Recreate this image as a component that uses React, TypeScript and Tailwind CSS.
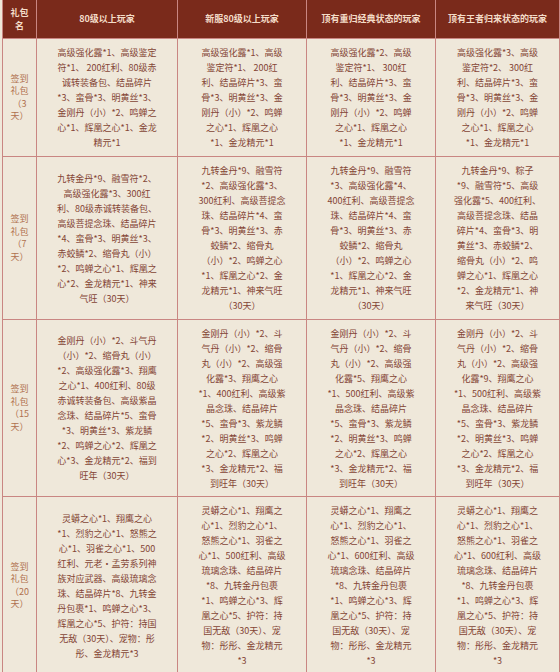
import React from "react";

const headers = ["80级以上玩家", "新服80级以上玩家", "顶有重归经典状态的玩家", "顶有王者归来状态的玩家"];

const rows: { label: string[]; cells: string[][] }[] = [
  {
    label: ["签到", "礼包", "（3", "天）"],
    cells: [
      ["高级强化露*1、高级鉴定", "符*1、 200红利、80级赤", "诚转装备包、结晶碎片", "*3、蛮骨*3、明黄丝*3、", "金刚丹（小）*2、鸣蝉之", "心*1、辉凰之心*1、金龙", "精元*1"],
      ["高级强化露*1、高级", "鉴定符*1、 200红", "利、结晶碎片*3、蛮", "骨*3、明黄丝*3、金", "刚丹（小）*2、鸣蝉", "之心*1、辉凰之心", "*1、金龙精元*1"],
      ["高级强化露*2、高级", "鉴定符*1、 300红", "利、结晶碎片*3、蛮", "骨*3、明黄丝*3、金", "刚丹（小）*2、鸣蝉", "之心*1、辉凰之心", "*1、金龙精元*1"],
      ["高级强化露*3、高级", "鉴定符*2、 300红", "利、结晶碎片*3、蛮", "骨*3、明黄丝*3、金", "刚丹（小）*2、鸣蝉", "之心*1、辉凰之心", "*1、金龙精元*1"],
    ],
  },
  {
    label: ["签到", "礼包", "（7", "天）"],
    cells: [
      ["九转金丹*9、融雪符*2、", "高级强化露*3、300红", "利、80级赤诚转装备包、", "高级菩提念珠、结晶碎片", "*4、蛮骨*3、明黄丝*3、", "赤蛟鳞*2、缩骨丸（小）", "*2、鸣蝉之心*1、辉凰之", "心*2、金龙精元*1、神来", "气旺（30天）"],
      ["九转金丹*9、融雪符", "*2、高级强化露*3、", "300红利、高级菩提念", "珠、结晶碎片*4、蛮", "骨*3、明黄丝*3、赤", "蛟鳞*2、缩骨丸", "（小）*2、鸣蝉之心", "*1、辉凰之心*2、金", "龙精元*1、神来气旺", "（30天）"],
      ["九转金丹*9、融雪符", "*3、高级强化露*4、", "400红利、高级菩提念", "珠、结晶碎片*4、蛮", "骨*3、明黄丝*3、赤", "蛟鳞*2、缩骨丸", "（小）*2、鸣蝉之心", "*1、辉凰之心*2、金", "龙精元*1、神来气旺", "（30天）"],
      ["九转金丹*9、粽子", "*9、融雪符*5、高级", "强化露*5、400红利、", "高级菩提念珠、结晶", "碎片*4、蛮骨*3、明", "黄丝*3、赤蛟鳞*2、", "缩骨丸（小）*2、鸣", "蝉之心*1、辉凰之心", "*2、金龙精元*1、神", "来气旺（30天）"],
    ],
  },
  {
    label: ["签到", "礼包", "（15", "天）"],
    cells: [
      ["金刚丹（小）*2、斗气丹", "（小）*2、缩骨丸（小）", "*2、高级强化露*3、翔鹰", "之心*1、400红利、80级", "赤诚转装备包、高级紫晶", "念珠、结晶碎片*5、蛮骨", "*3、明黄丝*3、紫龙鳞", "*2、鸣蝉之心*2、辉凰之", "心*3、金龙精元*2、福到", "旺年（30天）"],
      ["金刚丹（小）*2、斗", "气丹（小）*2、缩骨", "丸（小）*2、高级强", "化露*3、翔鹰之心", "*1、400红利、高级紫", "晶念珠、结晶碎片", "*5、蛮骨*3、紫龙鳞", "*2、明黄丝*3、鸣蝉", "之心*2、辉凰之心", "*3、金龙精元*2、福", "到旺年（30天）"],
      ["金刚丹（小）*2、斗", "气丹（小）*2、缩骨", "丸（小）*2、高级强", "化露*5、翔鹰之心", "*1、500红利、高级紫", "晶念珠、结晶碎片", "*5、蛮骨*3、紫龙鳞", "*2、明黄丝*3、鸣蝉", "之心*2、辉凰之心", "*3、金龙精元*2、福", "到旺年（30天）"],
      ["金刚丹（小）*2、斗", "气丹（小）*2、缩骨", "丸（小）*2、高级强", "化露*9、翔鹰之心", "*1、500红利、高级紫", "晶念珠、结晶碎片", "*5、蛮骨*3、紫龙鳞", "*2、明黄丝*3、鸣蝉", "之心*2、辉凰之心", "*3、金龙精元*2、福", "到旺年（30天）"],
    ],
  },
  {
    label: ["签到", "礼包", "（20", "天）"],
    cells: [
      ["灵蟒之心*1、翔鹰之心", "*1、烈豹之心*1、怒熊之", "心*1、羽雀之心*1、500", "红利、元老•孟劳系列神", "族对应武器、高级琉璃念", "珠、结晶碎片*8、九转金", "丹包裹*1、鸣蝉之心*3、", "辉凰之心*5、护符：持国", "无敌（30天）、宠物：彤", "彤、金龙精元*3"],
      ["灵蟒之心*1、翔鹰之", "心*1、烈豹之心*1、", "怒熊之心*1、羽雀之", "心*1、500红利、高级", "琉璃念珠、结晶碎片", "*8、九转金丹包裹", "*1、鸣蝉之心*3、辉", "凰之心*5、护符：持", "国无敌（30天）、宠", "物：彤彤、金龙精元", "*3"],
      ["灵蟒之心*1、翔鹰之", "心*1、烈豹之心*1、", "怒熊之心*1、羽雀之", "心*1、600红利、高级", "琉璃念珠、结晶碎片", "*8、九转金丹包裹", "*1、鸣蝉之心*3、辉", "凰之心*5、护符：持", "国无敌（30天）、宠", "物：彤彤、金龙精元", "*3"],
      ["灵蟒之心*1、翔鹰之", "心*1、烈豹之心*1、", "怒熊之心*1、羽雀之", "心*1、600红利、高级", "琉璃念珠、结晶碎片", "*8、九转金丹包裹", "*1、鸣蝉之心*3、辉", "凰之心*5、护符：持", "国无敌（30天）、宠", "物：彤彤、金龙精元", "*3"],
    ],
  },
];

const font = { fontFamily: '"Noto Sans CJK SC", "Noto Sans", sans-serif' };

export default function App() {
  return (
    <div className="w-[560px] h-[672px] overflow-hidden bg-[#efe8da]" style={font}>
      <div className="ml-[2px] w-[558px] bg-[#c98682] px-px pb-px grid grid-cols-[33px_140px_128px_128px_123px] grid-rows-[38px_117px_162px_176px_177px] gap-px">
        <div className="bg-[#7a2a1b] flex flex-col items-center justify-center text-[9px] leading-[13px] font-bold text-[#f4dcc8]">
          <span>礼包</span>
          <span>名</span>
        </div>
        {headers.map((h) => (
          <div key={h} className="bg-[#7a2a1b] flex items-center justify-center text-[9px] font-bold text-[#f4dcc8]">
            {h}
          </div>
        ))}
        {rows.map((r, i) => (
          <React.Fragment key={i}>
            <div className="bg-[#efe8da] flex flex-col items-center justify-center text-[9px] leading-[12.5px] text-[#b0714e]">
              {r.label.map((l, k) => (
                <span key={k}>{l}</span>
              ))}
            </div>
            {r.cells.map((c, j) => (
              <div key={j} className="bg-[#efe8da] flex flex-col items-center justify-center text-[9px] leading-[15px] text-[#844535] whitespace-nowrap">
                {c.map((l, k) => (
                  <span key={k}>{l}</span>
                ))}
              </div>
            ))}
          </React.Fragment>
        ))}
      </div>
    </div>
  );
}
